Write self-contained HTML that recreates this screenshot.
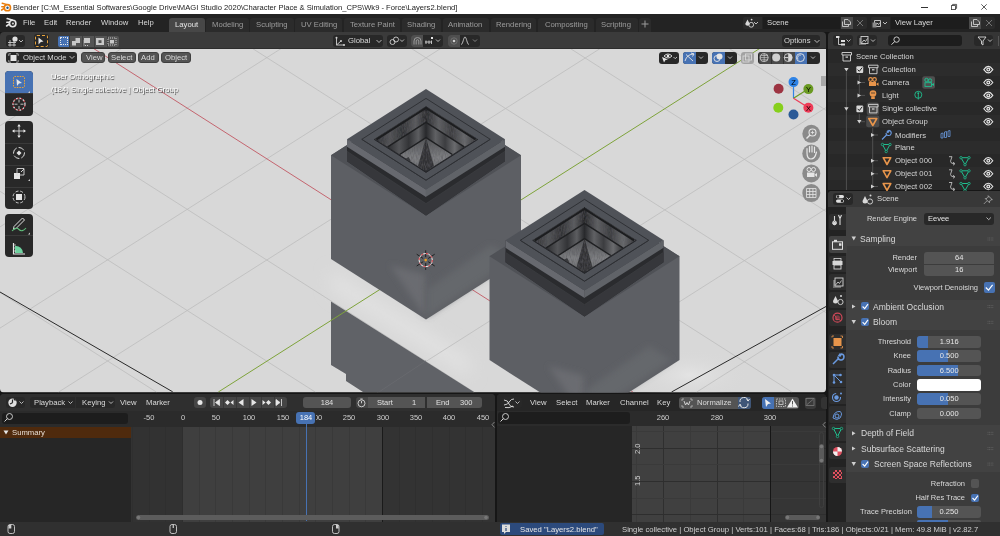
<!DOCTYPE html>
<html><head><meta charset="utf-8">
<style>
*{box-sizing:border-box;margin:0;padding:0}
html,body{width:1000px;height:536px;overflow:hidden;background:#161616}
body{position:relative;font-family:"Liberation Sans",sans-serif;font-size:7.7px;color:#d4d4d4}
.a{position:absolute}
.t{position:absolute;white-space:pre;line-height:10px;height:10px;will-change:transform}
.btn{position:absolute;background:#545454;border-radius:2px}
.fld{position:absolute;background:#545454;border-radius:2px}
svg{position:absolute;overflow:visible}
</style></head><body>

<!-- TITLE BAR -->
<div class="a" style="left:0;top:0;width:1000px;height:14px;background:#fff"></div>
<div class="t" style="left:13px;top:3px;color:#1a1a1a;font-size:7.6px">Blender [C:\M_Essential Softwares\Google Drive\MAGI Studio 2020\Character Place &amp; Simulation_CPS\Wk9 - Force\Layers2.blend]</div>

<!-- TOP BAR -->
<div class="a" style="left:0;top:14px;width:1000px;height:18px;background:#232323"></div>


<!-- title icons -->
<svg style="left:0;top:0" width="14" height="14" viewBox="0 0 14 14">
 <path d="M2.2 3.3 L7 4.6 M1.8 6.8 L4.9 6.8 M1.6 10 L4.6 8.2" stroke="#e87d0d" stroke-width="1.5" stroke-linecap="round"/>
 <circle cx="7.4" cy="7.7" r="3.1" fill="#fff" stroke="#e87d0d" stroke-width="1.6"/>
 <circle cx="7.5" cy="7.7" r="1.2" fill="#265787"/>
</svg>
<div class="a" style="left:921px;top:7px;width:7px;height:1px;background:#333"></div>
<svg style="left:951px;top:4px" width="6" height="6" viewBox="0 0 6 6"><rect x="0.4" y="1.6" width="4" height="4" fill="none" stroke="#333" stroke-width="0.8"/><path d="M1.6 1.6 V0.4 H5.6 V4.4 H4.4" fill="none" stroke="#333" stroke-width="0.8"/></svg>
<svg style="left:981px;top:4px" width="6" height="6" viewBox="0 0 6 6"><path d="M0.3 0.3 L5.7 5.7 M5.7 0.3 L0.3 5.7" stroke="#333" stroke-width="0.8"/></svg>

<!-- TOP BAR CONTENT -->
<svg style="left:0;top:14px" width="20" height="18" viewBox="0 14 20 18">
 <path d="M7.2 18.6 L12.2 19.9 M6.8 22.3 L10.2 22.3 M6.6 26 L9.8 23.6" stroke="#e6e6e6" stroke-width="1.6" stroke-linecap="round"/>
 <circle cx="12.7" cy="23.5" r="3.2" fill="#232323" stroke="#e6e6e6" stroke-width="1.6"/>
 <circle cx="12.9" cy="23.5" r="1.1" fill="#d0d0d0"/>
</svg>
<div class="t" style="left:22.5px;top:18px;color:#d9d9d9">File</div>
<div class="t" style="left:43.7px;top:18px;color:#d9d9d9">Edit</div>
<div class="t" style="left:66.2px;top:18px;color:#d9d9d9">Render</div>
<div class="t" style="left:100.7px;top:18px;color:#d9d9d9">Window</div>
<div class="t" style="left:138px;top:18px;color:#d9d9d9">Help</div>
<div class="a" style="left:169px;top:18px;width:35.5px;height:14px;background:#474747;border-radius:3px 3px 0 0"></div>
<div class="a" style="left:206px;top:18px;width:42.5px;height:14px;background:#2b2b2b;border-radius:3px 3px 0 0"></div>
<div class="a" style="left:250px;top:18px;width:43.5px;height:14px;background:#2b2b2b;border-radius:3px 3px 0 0"></div>
<div class="a" style="left:295px;top:18px;width:47px;height:14px;background:#2b2b2b;border-radius:3px 3px 0 0"></div>
<div class="a" style="left:344px;top:18px;width:56px;height:14px;background:#2b2b2b;border-radius:3px 3px 0 0"></div>
<div class="a" style="left:402px;top:18px;width:39px;height:14px;background:#2b2b2b;border-radius:3px 3px 0 0"></div>
<div class="a" style="left:443px;top:18px;width:46px;height:14px;background:#2b2b2b;border-radius:3px 3px 0 0"></div>
<div class="a" style="left:491px;top:18px;width:45px;height:14px;background:#2b2b2b;border-radius:3px 3px 0 0"></div>
<div class="a" style="left:538px;top:18px;width:55.5px;height:14px;background:#2b2b2b;border-radius:3px 3px 0 0"></div>
<div class="a" style="left:595.5px;top:18px;width:42px;height:14px;background:#2b2b2b;border-radius:3px 3px 0 0"></div>
<div class="a" style="left:639px;top:18px;width:12px;height:14px;background:#2b2b2b;border-radius:3px 3px 0 0"></div>
<div class="t" style="left:175px;top:19.5px;color:#e6e6e6">Layout</div>
<div class="t" style="left:211.7px;top:19.5px;color:#9c9c9c">Modeling</div>
<div class="t" style="left:255.5px;top:19.5px;color:#9c9c9c">Sculpting</div>
<div class="t" style="left:300.7px;top:19.5px;color:#9c9c9c">UV Editing</div>
<div class="t" style="left:350px;top:19.5px;color:#9c9c9c">Texture Paint</div>
<div class="t" style="left:406.7px;top:19.5px;color:#9c9c9c">Shading</div>
<div class="t" style="left:448px;top:19.5px;color:#9c9c9c">Animation</div>
<div class="t" style="left:495.5px;top:19.5px;color:#9c9c9c">Rendering</div>
<div class="t" style="left:544.5px;top:19.5px;color:#9c9c9c">Compositing</div>
<div class="t" style="left:600.7px;top:19.5px;color:#9c9c9c">Scripting</div>
<svg style="left:641px;top:20px" width="8" height="8" viewBox="0 0 8 8"><path d="M4 0.5 V7.5 M0.5 4 H7.5" stroke="#9c9c9c" stroke-width="1"/></svg>

<!-- scene selector -->
<div class="a" style="left:743px;top:17px;width:19px;height:12px;background:#2b2b2b;border-radius:2px 0 0 2px"></div>
<svg style="left:744px;top:18px" width="17" height="10" viewBox="0 0 17 10">
 <path d="M3.5 1.5 L1.2 6 A2.4 2.4 0 0 0 5.8 6 Z" fill="#d8d8d8"/><circle cx="7.2" cy="6.8" r="2.4" fill="none" stroke="#d8d8d8" stroke-width="0.9"/><circle cx="7.6" cy="1.6" r="0.9" fill="#d8d8d8"/>
 <path d="M10 4 L12 6 L14 4" fill="none" stroke="#cfcfcf" stroke-width="0.9"/>
</svg>
<div class="a" style="left:763px;top:17px;width:77px;height:12px;background:#1d1d1d"></div>
<div class="t" style="left:767px;top:18px;color:#d9d9d9">Scene</div>
<div class="a" style="left:840.5px;top:17px;width:12px;height:12px;background:#4a4a4a"></div>
<div class="a" style="left:852.5px;top:17px;width:14px;height:12px;background:#2b2b2b;border-radius:0 2px 2px 0"></div>
<svg style="left:841px;top:18px" width="11" height="10" viewBox="0 0 11 10"><path d="M1.5 3.5 V8.5 H7.5 V6.5 M3.5 6.5 V1.5 H7 L9.5 4 V6.5 H3.5" fill="none" stroke="#cfcfcf" stroke-width="0.9"/></svg>
<svg style="left:856px;top:19px" width="8" height="8" viewBox="0 0 8 8"><path d="M1 1 L7 7 M7 1 L1 7" stroke="#7a7a7a" stroke-width="0.9"/></svg>

<div class="a" style="left:871px;top:17px;width:19px;height:12px;background:#2b2b2b;border-radius:2px 0 0 2px"></div>
<svg style="left:872px;top:18px" width="17" height="10" viewBox="0 0 17 10">
 <path d="M2.5 2.5 H8.5 V8.5 H2.5 Z" fill="none" stroke="#cfcfcf" stroke-width="0.9"/><path d="M3 8 L5 5 L6.5 6.5 L8 4.5" fill="none" stroke="#cfcfcf" stroke-width="0.9"/><rect x="0.5" y="4.5" width="4" height="5" fill="#8a8a8a"/>
 <path d="M11 4 L13 6 L15 4" fill="none" stroke="#cfcfcf" stroke-width="0.9"/>
</svg>
<div class="a" style="left:891px;top:17px;width:78px;height:12px;background:#1d1d1d"></div>
<div class="t" style="left:895px;top:18px;color:#d9d9d9">View Layer</div>
<div class="a" style="left:969px;top:17px;width:12px;height:12px;background:#4a4a4a"></div>
<div class="a" style="left:981px;top:17px;width:14px;height:12px;background:#2b2b2b;border-radius:0 2px 2px 0"></div>
<svg style="left:969.5px;top:18px" width="11" height="10" viewBox="0 0 11 10"><path d="M1.5 3.5 V8.5 H7.5 V6.5 M3.5 6.5 V1.5 H7 L9.5 4 V6.5 H3.5" fill="none" stroke="#cfcfcf" stroke-width="0.9"/></svg>
<svg style="left:985px;top:19px" width="8" height="8" viewBox="0 0 8 8"><path d="M1 1 L7 7 M7 1 L1 7" stroke="#7a7a7a" stroke-width="0.9"/></svg>

<!-- VIEWPORT -->
<!--VP-->
<svg style="left:0;top:0" width="826" height="392" viewBox="0 0 826 392">
<defs>
<linearGradient id="wl" x1="0" y1="0" x2="1" y2="0"><stop offset="0" stop-color="#2c2d30"/><stop offset="0.3" stop-color="#535457"/><stop offset="0.55" stop-color="#333437"/><stop offset="0.8" stop-color="#5c5d60"/><stop offset="1" stop-color="#28292c"/></linearGradient>
<linearGradient id="wr" x1="0" y1="0" x2="1" y2="0"><stop offset="0" stop-color="#28292c"/><stop offset="0.25" stop-color="#606164"/><stop offset="0.5" stop-color="#3c3d40"/><stop offset="0.75" stop-color="#6a6b6e"/><stop offset="1" stop-color="#333437"/></linearGradient>
<linearGradient id="fl" x1="0" y1="0" x2="0" y2="1"><stop offset="0" stop-color="#505154"/><stop offset="0.6" stop-color="#7f8083"/><stop offset="1" stop-color="#6a6b6e"/></linearGradient>
<linearGradient id="crease" x1="0" y1="1" x2="0" y2="0"><stop offset="0" stop-color="#6a6c71"/><stop offset="1" stop-color="#5d5f64" stop-opacity="0"/></linearGradient>
<radialGradient id="glow" cx="0.5" cy="0.5" r="0.5"><stop offset="0" stop-color="#e6e6e6"/><stop offset="1" stop-color="#d8d8d8" stop-opacity="0"/></radialGradient>
<filter id="soft" x="-0.2" y="-0.2" width="1.4" height="1.4"><feGaussianBlur stdDeviation="3"/></filter><filter id="blur8" x="-0.5" y="-0.5" width="2" height="2"><feGaussianBlur stdDeviation="8"/></filter>
<filter id="noise2" x="0" y="0" width="1" height="1"><feTurbulence type="fractalNoise" baseFrequency="0.9 0.25" numOctaves="2" seed="7" result="n"/><feColorMatrix in="n" type="matrix" values="0 0 0 0 0.1  0 0 0 0 0.1  0 0 0 0 0.11  -1.2 0 0 0 0.75" result="c"/><feComposite in="c" in2="SourceGraphic" operator="in" result="m"/><feMerge><feMergeNode in="SourceGraphic"/><feMergeNode in="m"/></feMerge></filter>
<filter id="noise" x="0" y="0" width="1" height="1"><feTurbulence type="fractalNoise" baseFrequency="2.2" numOctaves="1" seed="3" result="n"/><feColorMatrix in="n" type="matrix" values="0 0 0 0 0.26  0 0 0 0 0.26  0 0 0 0 0.27  -0.7 0 0 0 0.5" result="c"/><feComposite in="c" in2="SourceGraphic" operator="in" result="m"/><feMerge><feMergeNode in="SourceGraphic"/><feMergeNode in="m"/></feMerge></filter>
</defs>
<clipPath id="vpc"><rect x="0" y="40" width="826" height="352.4" rx="4"/></clipPath><g clip-path="url(#vpc)">
<rect x="0" y="48" width="826" height="344.4" fill="#d8d8d8"/>
<polygon points="331,270 426,330 470,358 470,378 331,290" fill="#e1e1e1" filter="url(#blur8)"/>
<ellipse cx="690" cy="375" rx="60" ry="26" fill="url(#glow)" opacity="0.8"/>
<path d="M0.0 292.5L156.3 392.0M0.0 191.3L315.2 392.0M0.0 90.1L474.0 392.0M226.6 32.0L791.8 392.0M385.5 32.0L826.0 312.6M544.4 32.0L826.0 211.4M703.3 32.0L826.0 110.2M0.0 125.7L147.6 32.0M0.0 226.9L307.2 32.0M0.0 328.1L466.7 32.0M58.7 392.0L626.2 32.0M377.8 392.0L826.0 107.6M537.3 392.0L826.0 208.8M696.8 392.0L826.0 310.0" stroke="#bcbcbc" stroke-width="0.8" fill="none"/>
<polygon points="331,301.5 474,392 363,392 346,381 346,374 331,365" fill="#606267"/>
<path d="M379.5 391.6 L426 360.8" stroke="#6a6b70" stroke-width="0.8"/>
<path d="M67.7 32.0L632.9 392.0" stroke="#c0505c" stroke-width="0.85" fill="none"/>
<path d="M218.3 392.0L785.7 32.0" stroke="#7ea33a" stroke-width="1" fill="none"/>
<path d="M0 292 L172.7 391.8 M671.5 392 L826 306.5" stroke="#2a2a2a" stroke-width="1" fill="none"/>
<polygon points="331.0,155.3 426.0,94.8 521.0,155.3 521.0,259.1 426.0,319.6 331.0,259.1" fill="#5d5f64"/>
<polygon points="390.0,265.1 425.0,316.6 425.0,274.6" fill="#6a6c71" filter="url(#soft)"/>
<polygon points="427.0,316.6 513.0,259.1 491.0,245.1 427.0,289.6" fill="#65676c" filter="url(#soft)"/>
<polygon points="331.0,155.3 426.0,94.8 521.0,155.3 426.0,215.8" fill="#4f5156"/>
<polygon points="347.0,139.3 426.0,189.6 505.0,139.3 505.0,161.3 426.0,215.6 347.0,161.3" fill="#2a2b2e"/>
<polygon points="347.0,151.3 426.0,203.6 505.0,151.3 505.0,161.3 426.0,215.6 347.0,161.3" fill="#36373b"/>
<polyline points="347.0,151.3 426.0,203.6 505.0,151.3" fill="none" stroke="#3e3f43" stroke-width="1" opacity="0.6"/>
<polygon points="347.0,139.3 426.0,189.6 426.0,197.1 347.0,146.8" fill="#67696f"/>
<polygon points="425.7,189.6 505.0,139.3 505.0,146.8 425.7,197.1" fill="#606368"/>
<polygon points="347.0,139.3 426.0,89.0 505.0,139.3 426.0,189.6" fill="#4f5258"/>
<polygon points="361.8,139.3 426.0,98.4 490.2,139.3 426.0,180.2" fill="none" stroke="#2f3135" stroke-width="1"/>
<polygon points="374.0,139.3 426.0,106.2 478.0,139.3 426.0,172.4" fill="#2a2b2e"/>
<polygon points="374.5,139.3 426.0,106.5 426.0,122.4 387.7,146.8" fill="url(#wl)" filter="url(#noise2)"/>
<polygon points="426.0,106.5 477.5,139.3 464.3,146.8 426.0,122.4" fill="url(#wr)" filter="url(#noise2)"/>
<polygon points="387.7,146.8 426.0,122.4 426.0,137.7 399.7,154.5" fill="url(#wl)"/>
<polygon points="426.0,122.4 464.3,146.8 452.3,154.5 426.0,137.7" fill="url(#wr)"/>
<polygon points="399.7,154.5 426.0,137.7 452.3,154.5 426.0,171.3" fill="url(#fl)" filter="url(#noise2)"/>
<polygon points="426.0,137.7 418.0,166.3 426.0,171.8 434.0,166.3" fill="#303134" filter="url(#noise2)"/>
<polyline points="376.5,139.3 426.0,108.0 475.5,139.3" fill="none" stroke="#1c1d1f" stroke-width="2"/>
<rect x="422.5" y="170.3" width="7" height="5" fill="#2a2b2e"/>
<rect x="404.0" y="158.3" width="6" height="4" fill="#3a3b3e" transform="rotate(-30 407.0 160.3)"/>
<polyline points="387.7,146.8 426.0,122.4 464.3,146.8" fill="none" stroke="#1f2022" stroke-width="1.4"/>
<polyline points="399.7,154.5 426.0,137.7 452.3,154.5" fill="none" stroke="#1f2022" stroke-width="1.4"/>
<polygon points="362.3,139.3 374.0,139.3 426.0,172.4 478.0,139.3 489.7,139.3 426.0,179.7" fill="#4f5258"/>
<polyline points="361.8,139.3 426.0,180.2 490.2,139.3" fill="none" stroke="#2f3135" stroke-width="1"/>
<polyline points="374.0,139.3 426.0,172.4 478.0,139.3" fill="none" stroke="#25262a" stroke-width="1"/>
<polygon points="489.5,256.3 584.5,195.8 679.5,256.3 679.5,360.1 584.5,420.6 489.5,360.1" fill="#5d5f64"/>
<polygon points="548.5,366.1 583.5,417.6 583.5,375.6" fill="#6a6c71" filter="url(#soft)"/>
<polygon points="585.5,417.6 671.5,360.1 649.5,346.1 585.5,390.6" fill="#65676c" filter="url(#soft)"/>
<polygon points="489.5,256.3 584.5,195.8 679.5,256.3 584.5,316.8" fill="#4f5156"/>
<polygon points="505.5,240.3 584.5,290.6 663.5,240.3 663.5,262.3 584.5,316.6 505.5,262.3" fill="#2a2b2e"/>
<polygon points="505.5,252.3 584.5,304.6 663.5,252.3 663.5,262.3 584.5,316.6 505.5,262.3" fill="#36373b"/>
<polyline points="505.5,252.3 584.5,304.6 663.5,252.3" fill="none" stroke="#3e3f43" stroke-width="1" opacity="0.6"/>
<polygon points="505.5,240.3 584.5,290.6 584.5,298.1 505.5,247.8" fill="#67696f"/>
<polygon points="584.2,290.6 663.5,240.3 663.5,247.8 584.2,298.1" fill="#606368"/>
<polygon points="505.5,240.3 584.5,190.0 663.5,240.3 584.5,290.6" fill="#4f5258"/>
<polygon points="520.3,240.3 584.5,199.4 648.7,240.3 584.5,281.2" fill="none" stroke="#2f3135" stroke-width="1"/>
<polygon points="532.5,240.3 584.5,207.2 636.5,240.3 584.5,273.4" fill="#2a2b2e"/>
<polygon points="533.0,240.3 584.5,207.5 584.5,223.4 546.2,247.8" fill="url(#wl)" filter="url(#noise2)"/>
<polygon points="584.5,207.5 636.0,240.3 622.8,247.8 584.5,223.4" fill="url(#wr)" filter="url(#noise2)"/>
<polygon points="546.2,247.8 584.5,223.4 584.5,238.7 558.2,255.5" fill="url(#wl)"/>
<polygon points="584.5,223.4 622.8,247.8 610.8,255.5 584.5,238.7" fill="url(#wr)"/>
<polygon points="558.2,255.5 584.5,238.7 610.8,255.5 584.5,272.3" fill="url(#fl)" filter="url(#noise2)"/>
<polygon points="584.5,238.7 576.5,267.3 584.5,272.8 592.5,267.3" fill="#303134" filter="url(#noise2)"/>
<polyline points="535.0,240.3 584.5,209.0 634.0,240.3" fill="none" stroke="#1c1d1f" stroke-width="2"/>
<rect x="581.0" y="271.3" width="7" height="5" fill="#2a2b2e"/>
<rect x="562.5" y="259.3" width="6" height="4" fill="#3a3b3e" transform="rotate(-30 565.5 261.3)"/>
<polyline points="546.2,247.8 584.5,223.4 622.8,247.8" fill="none" stroke="#1f2022" stroke-width="1.4"/>
<polyline points="558.2,255.5 584.5,238.7 610.8,255.5" fill="none" stroke="#1f2022" stroke-width="1.4"/>
<polygon points="520.8,240.3 532.5,240.3 584.5,273.4 636.5,240.3 648.2,240.3 584.5,280.7" fill="#4f5258"/>
<polyline points="520.3,240.3 584.5,281.2 648.7,240.3" fill="none" stroke="#2f3135" stroke-width="1"/>
<polyline points="532.5,240.3 584.5,273.4 636.5,240.3" fill="none" stroke="#25262a" stroke-width="1"/>
<path d="M425.7 250.3 V257.1 M425.7 263.1 V269.9 M416.7 254.2 L423.2 258.5 M428.2 261.7 L434.7 266.0 M434.7 254.2 L428.2 258.5 M423.2 261.7 L416.7 266.0" stroke="#1a1a1a" stroke-width="0.9"/>
<circle cx="425.7" cy="260.1" r="6.6" fill="none" stroke="#f0f0f0" stroke-width="1"/>
<circle cx="425.7" cy="260.1" r="6.6" fill="none" stroke="#d8262f" stroke-width="1" stroke-dasharray="2.3 2.9"/>
<circle cx="425.7" cy="260.1" r="1.3" fill="#f0a020"/>
</g></svg>
<!--/VP-->
<div class="a" style="left:0;top:32px;width:826px;height:17px;background:#3b3b3b;border-radius:4px 4px 0 0"></div><div class="a" style="left:0;top:47.5px;width:826px;height:1.5px;background:#2d2d2d"></div>
<!--VPUI-->
<!-- tool header -->
<div class="a" style="left:6px;top:35px;width:19px;height:11.5px;background:#282828;border-radius:3px"></div>
<svg style="left:7px;top:35px" width="18" height="12" viewBox="0 0 18 12">
 <path d="M1 7.5 H9 M1 10 H9 M3 5 V11.5 M7 5 V11.5" stroke="#d0d0d0" stroke-width="0.9"/>
 <circle cx="8" cy="4" r="2.6" fill="#e0e0e0"/>
 <path d="M12 5 L14 7 L16 5" fill="none" stroke="#c8c8c8" stroke-width="0.9"/>
</svg>
<div class="a" style="left:33.5px;top:34px;width:15px;height:14px;background:#282828;border-radius:3px"></div>
<div class="a" style="left:34.5px;top:35px;width:13px;height:12px;border:1px dashed #e8a33b;border-radius:2px"></div>
<svg style="left:37px;top:37px" width="8" height="8" viewBox="0 0 8 8"><path d="M1.5 0.5 L6.5 4.5 L3.8 5 L1.5 7.5 Z" fill="#e6e6e6"/></svg>
<div class="a" style="left:58px;top:35.5px;width:11.3px;height:11px;background:#4772b3;border-radius:2px 0 0 2px"></div>
<div class="a" style="left:59.5px;top:37px;width:8.3px;height:8px;border:1px dotted #e6e6e6"></div>
<div class="a" style="left:70px;top:35.5px;width:49px;height:11px;background:#545454;border-radius:0 2px 2px 0"></div>
<div class="a" style="left:81.5px;top:35.5px;width:1px;height:11px;background:#3f3f3f"></div>
<div class="a" style="left:94px;top:35.5px;width:1px;height:11px;background:#3f3f3f"></div>
<div class="a" style="left:106.5px;top:35.5px;width:1px;height:11px;background:#3f3f3f"></div>
<svg style="left:71px;top:36.5px" width="48" height="9" viewBox="0 0 48 9">
 <path d="M1 4 H4.5 V1 H9 V6 H5 V8.5 H1 Z" fill="#c8c8c8"/>
 <rect x="13" y="1" width="6" height="5" fill="#c8c8c8"/><path d="M13 3.5 V8.5 H17" fill="none" stroke="#c8c8c8" stroke-dasharray="1 1"/>
 <rect x="25" y="1" width="8" height="7" fill="#c8c8c8"/><rect x="27.5" y="3.2" width="3" height="2.8" fill="#545454"/>
 <rect x="37" y="1" width="8" height="7" fill="none" stroke="#c8c8c8" stroke-dasharray="1 1"/><rect x="39" y="3" width="4" height="3.5" fill="#c8c8c8"/>
</svg>

<div class="a" style="left:332.5px;top:35px;width:50px;height:11.5px;background:#282828;border-radius:3px"></div>
<svg style="left:334px;top:35.5px" width="12" height="11" viewBox="0 0 12 11"><path d="M2.5 1 V9 H10.5 M2.5 9 L7 5" fill="none" stroke="#cfcfcf" stroke-width="0.9"/><circle cx="2.5" cy="1.8" r="1" fill="#cfcfcf"/><circle cx="10" cy="9" r="1" fill="#cfcfcf"/><circle cx="7" cy="5" r="1" fill="#cfcfcf"/></svg>
<div class="t" style="left:348px;top:36px;color:#dadada">Global</div>
<svg style="left:376px;top:38.5px" width="6" height="5" viewBox="0 0 6 5"><path d="M0.5 1 L3 3.5 L5.5 1" fill="none" stroke="#c8c8c8" stroke-width="0.9"/></svg>
<div class="a" style="left:387px;top:35px;width:19.5px;height:11.5px;background:#282828;border-radius:3px"></div>
<svg style="left:389px;top:36px" width="17" height="10" viewBox="0 0 17 10"><circle cx="3.5" cy="6" r="2.5" fill="none" stroke="#cfcfcf" stroke-width="0.9"/><circle cx="7" cy="3.5" r="2.5" fill="none" stroke="#cfcfcf" stroke-width="0.9"/><path d="M11 3.5 L13 5.5 L15 3.5" fill="none" stroke="#c8c8c8" stroke-width="0.9"/></svg>
<div class="a" style="left:411px;top:35px;width:32px;height:11.5px;background:#282828;border-radius:3px"></div>
<div class="a" style="left:411px;top:35px;width:12px;height:11.5px;background:#4f4f4f;border-radius:3px 0 0 3px"></div>
<svg style="left:412px;top:36px" width="30" height="10" viewBox="0 0 30 10"><path d="M2 8.5 V5 A3.5 3.5 0 0 1 9 5 V8.5 M4.2 8.5 V5 A1.3 1.3 0 0 1 6.8 5 V8.5" fill="none" stroke="#9a9a9a" stroke-width="1"/><path d="M13 6 H20 M14 4.5 V8 M17 4.5 V8 M19.5 4.5 V8" stroke="#cfcfcf" stroke-width="0.9"/><rect x="19" y="1" width="2" height="2" fill="#e6e6e6"/><path d="M24 3.5 L26 5.5 L28 3.5" fill="none" stroke="#c8c8c8" stroke-width="0.9"/></svg>
<div class="a" style="left:448px;top:35px;width:32px;height:11.5px;background:#282828;border-radius:3px"></div>
<div class="a" style="left:448px;top:35px;width:12px;height:11.5px;background:#4f4f4f;border-radius:3px 0 0 3px"></div>
<svg style="left:449px;top:36px" width="30" height="10" viewBox="0 0 30 10"><circle cx="5" cy="5" r="3.2" fill="none" stroke="#777" stroke-width="0.8"/><circle cx="5" cy="5" r="1.3" fill="#cfcfcf"/><path d="M12 8.5 C14 8.5 14.5 1 16 1 C17.5 1 18 8.5 20 8.5" fill="none" stroke="#cfcfcf" stroke-width="0.9"/><path d="M24 3.5 L26 5.5 L28 3.5" fill="none" stroke="#8a8a8a" stroke-width="0.9"/></svg>

<div class="a" style="left:782px;top:35px;width:38px;height:11.5px;background:#282828;border-radius:3px"></div>
<div class="t" style="left:784px;top:36px;color:#dadada">Options</div>
<svg style="left:814px;top:38.5px" width="6" height="5" viewBox="0 0 6 5"><path d="M0.5 1 L3 3.5 L5.5 1" fill="none" stroke="#c8c8c8" stroke-width="0.9"/></svg>

<!-- header row 2 -->
<div class="a" style="left:6px;top:51.5px;width:70.5px;height:11.7px;background:#282828;border-radius:3px"></div>
<svg style="left:8px;top:52.5px" width="11" height="10" viewBox="0 0 11 10"><rect x="2.5" y="2" width="6" height="6" fill="#e6e6e6"/><path d="M0.8 3 V0.8 H3 M8 0.8 H10.2 V3 M10.2 7 V9.2 H8 M3 9.2 H0.8 V7" fill="none" stroke="#aaa" stroke-width="0.9"/></svg>
<div class="t" style="left:23px;top:52.5px;color:#dadada">Object Mode</div>
<svg style="left:69px;top:55px" width="6" height="5" viewBox="0 0 6 5"><path d="M0.5 1 L3 3.5 L5.5 1" fill="none" stroke="#c8c8c8" stroke-width="0.9"/></svg>
<div class="a" style="left:81px;top:51.5px;width:24px;height:11.7px;background:#545454;border-radius:3px;border:1px solid #3f3f3f"></div>
<div class="a" style="left:107.5px;top:51.5px;width:28.3px;height:11.7px;background:#545454;border-radius:3px;border:1px solid #3f3f3f"></div>
<div class="a" style="left:137.5px;top:51.5px;width:21px;height:11.7px;background:#545454;border-radius:3px;border:1px solid #3f3f3f"></div>
<div class="a" style="left:160.7px;top:51.5px;width:30.5px;height:11.7px;background:#545454;border-radius:3px;border:1px solid #3f3f3f"></div>
<div class="t" style="left:85.5px;top:52.5px;color:#dadada">View</div>
<div class="t" style="left:111px;top:52.5px;color:#dadada">Select</div>
<div class="t" style="left:141px;top:52.5px;color:#dadada">Add</div>
<div class="t" style="left:164.5px;top:52.5px;color:#dadada">Object</div>

<div class="a" style="left:659px;top:51.6px;width:20.2px;height:12.2px;background:#282828;border-radius:3px"></div>
<svg style="left:660px;top:52px" width="19" height="11" viewBox="0 0 19 11"><path d="M4 4 Q8 0 12 4 Q8 8 4 4 Z" fill="none" stroke="#e6e6e6" stroke-width="0.9"/><circle cx="8" cy="4" r="1.3" fill="#e6e6e6"/><path d="M2 5 L8 7.5 L5.5 8 L4 10.5 Z" fill="#e6e6e6"/><path d="M13.5 5 L15.2 6.7 L17 5" fill="none" stroke="#c8c8c8" stroke-width="0.9"/></svg>
<div class="a" style="left:683px;top:51.6px;width:25px;height:12.2px;background:#282828;border-radius:3px"></div>
<div class="a" style="left:683px;top:51.6px;width:13px;height:12.2px;background:#4772b3;border-radius:3px 0 0 3px"></div>
<svg style="left:683px;top:52px" width="25" height="11" viewBox="0 0 25 11"><path d="M2 9 Q4 2 11 2 M8 1 L11 2 L9.5 4.5 M3 2.5 L10 9" fill="none" stroke="#e6e6e6" stroke-width="0.9"/><path d="M16 4.5 L18 6.5 L20 4.5" fill="none" stroke="#c8c8c8" stroke-width="0.9"/></svg>
<div class="a" style="left:712px;top:51.6px;width:25.3px;height:12.2px;background:#282828;border-radius:3px"></div>
<div class="a" style="left:712px;top:51.6px;width:13px;height:12.2px;background:#4772b3;border-radius:3px 0 0 3px"></div>
<svg style="left:712px;top:52px" width="25" height="11" viewBox="0 0 25 11"><circle cx="5" cy="6.5" r="3" fill="none" stroke="#e6e6e6" stroke-width="0.9"/><circle cx="7.5" cy="4.5" r="3" fill="#e6e6e6"/><path d="M16 4.5 L18 6.5 L20 4.5" fill="none" stroke="#c8c8c8" stroke-width="0.9"/></svg>
<div class="a" style="left:741.4px;top:51.6px;width:12.6px;height:12.2px;background:#a2a2a2;border-radius:3px"></div>
<svg style="left:742px;top:53px" width="11" height="10" viewBox="0 0 11 10"><rect x="1" y="3" width="6" height="6" fill="none" stroke="#d8d8d8" stroke-width="0.9"/><rect x="3.5" y="1" width="6" height="6" fill="none" stroke="#d8d8d8" stroke-width="0.9"/></svg>
<div class="a" style="left:757.5px;top:51.6px;width:62.5px;height:12.2px;background:#282828;border-radius:3px"></div>
<div class="a" style="left:758.5px;top:51.6px;width:48px;height:12.2px;background:#4a4a4a;border-radius:3px 0 0 3px"></div>
<div class="a" style="left:770.5px;top:51.6px;width:0.8px;height:12.2px;background:#333"></div>
<div class="a" style="left:782.5px;top:51.6px;width:0.8px;height:12.2px;background:#333"></div>
<div class="a" style="left:794.5px;top:51.6px;width:12px;height:12.2px;background:#4772b3"></div>
<svg style="left:758px;top:52px" width="62" height="11" viewBox="0 0 62 11">
 <circle cx="6.2" cy="5.6" r="4" fill="none" stroke="#d8d8d8" stroke-width="0.8"/><path d="M2.2 5.6 H10.2 M6.2 1.6 V9.6 M3 3.5 H9.4 M3 7.8 H9.4" stroke="#d8d8d8" stroke-width="0.6"/>
 <circle cx="18.2" cy="5.6" r="4" fill="#d0d0d0"/>
 <circle cx="30.2" cy="5.6" r="4" fill="none" stroke="#d8d8d8" stroke-width="0.8"/><path d="M30.2 1.6 A4 4 0 0 1 30.2 9.6 Z" fill="#d8d8d8"/><path d="M26.2 5.6 H30.2" stroke="#d8d8d8"/>
 <circle cx="42.4" cy="5.6" r="4" fill="none" stroke="#e8e8e8" stroke-width="0.9"/><path d="M40 7.5 A3 3 0 0 1 43 3" fill="none" stroke="#e8e8e8" stroke-width="0.8"/>
 <path d="M53 4.5 L55 6.5 L57 4.5" fill="none" stroke="#c8c8c8" stroke-width="0.9"/>
</svg>

<!-- viewport text -->
<div class="t" style="left:51.2px;top:71.5px;color:#ffffff;text-shadow:0.7px 0.7px 0.8px rgba(0,0,0,0.75)">User Orthographic</div>
<div class="t" style="left:51.2px;top:85px;color:#ffffff;text-shadow:0.7px 0.7px 0.8px rgba(0,0,0,0.75)">(184) Single collective | Object Group</div>

<!-- left toolbar -->
<div class="a" style="left:5px;top:71px;width:28px;height:45.4px;background:#282828;border-radius:4px"></div>
<div class="a" style="left:5px;top:71px;width:28px;height:22.5px;background:#4772b3;border-radius:4px 4px 0 0"></div>
<div class="a" style="left:5px;top:120.6px;width:28px;height:88.2px;background:#282828;border-radius:4px"></div>
<div class="a" style="left:5px;top:213.8px;width:28px;height:43.2px;background:#282828;border-radius:4px"></div>
<div class="a" style="left:5px;top:93.4px;width:28px;height:0.7px;background:#3a3a3a"></div>
<div class="a" style="left:5px;top:142.6px;width:28px;height:0.7px;background:#3a3a3a"></div>
<div class="a" style="left:5px;top:164.6px;width:28px;height:0.7px;background:#3a3a3a"></div>
<div class="a" style="left:5px;top:186.6px;width:28px;height:0.7px;background:#3a3a3a"></div>
<div class="a" style="left:5px;top:235.4px;width:28px;height:0.7px;background:#3a3a3a"></div>
<svg style="left:5px;top:71px" width="28" height="186" viewBox="0 0 28 186">
 <rect x="8.5" y="5.5" width="11" height="11" rx="1" fill="none" stroke="#e8a33b" stroke-width="1" stroke-dasharray="1.6 1"/>
 <path d="M11.5 8 L17 12 L14 12.5 L12 15 Z" fill="#e6e6e6"/>
 <path d="M25 20 V22 H23 Z" fill="#ccc"/>
 <circle cx="14" cy="33.2" r="6" fill="none" stroke="#e6e6e6" stroke-width="1.2" stroke-dasharray="2 1.5"/>
 <circle cx="14" cy="33.2" r="6" fill="none" stroke="#c0323c" stroke-width="1.2" stroke-dasharray="1.5 2" stroke-dashoffset="2"/>
 <path d="M14 28.5 V31.5 M14 35 V38 M9.5 33.2 H12.5 M15.5 33.2 H18.5" stroke="#e6e6e6" stroke-width="0.8"/>
 <path d="M14 54 V66 M8 60 H20" stroke="#d8d8d8" stroke-width="0.9"/>
 <path d="M14 53 L12.3 55.5 H15.7 Z M14 67 L12.3 64.5 H15.7 Z M7 60 L9.5 58.3 V61.7 Z M21 60 L18.5 58.3 V61.7 Z" fill="#e6e6e6"/>
 <path d="M8.5 82 A5.5 5.5 0 0 1 19.5 82 M19.5 82 A5.5 5.5 0 0 1 8.5 82" fill="none" stroke="#d8d8d8" stroke-width="1" stroke-dasharray="6 2"/>
 <path d="M14 79.5 L16.5 82 L14 84.5 L11.5 82 Z" fill="#e6e6e6"/>
 <rect x="9" y="102" width="6" height="6" fill="#e6e6e6"/><path d="M12 105 V97.5 H19 V104 H14.5" fill="none" stroke="#d8d8d8" stroke-width="0.9"/><path d="M16 101 L19 98" stroke="#d8d8d8"/>
 <path d="M25 108 V110 H23 Z" fill="#ccc"/>
 <circle cx="14" cy="126" r="6" fill="none" stroke="#d8d8d8" stroke-width="0.9" stroke-dasharray="3 1.8"/>
 <rect x="11" y="123" width="6" height="6" fill="#e6e6e6"/>
 <path d="M9 155.5 L17.5 147 L19.5 149 L11 157.5 L8.5 158 Z" fill="none" stroke="#e0e0e0" stroke-width="1"/>
 <path d="M7 160 Q11 155.5 14 158.5 Q17 161.5 21 157" fill="none" stroke="#5fbf7a" stroke-width="1.1"/>
 <path d="M25 161.5 V163.5 H23 Z" fill="#ccc"/>
 <path d="M8.5 172 V183 H20" fill="none" stroke="#e6e6e6" stroke-width="1.2"/>
 <path d="M10 182 V175 A7 7 0 0 1 18 182 Z" fill="#6fd2a0"/>
 <path d="M8 174 H11 M8 177 H10 M8 180 H11" stroke="#e6e6e6" stroke-width="0.7"/>
</svg>

<!-- nav gizmo -->
<svg style="left:760px;top:70px" width="66" height="140" viewBox="760 70 66 140">
 <circle cx="778.6" cy="88.8" r="5" fill="#9d3442"/>
 <circle cx="778.3" cy="107.8" r="5" fill="#86cf1c"/>
 <circle cx="793.5" cy="114.5" r="5" fill="#2b5a97"/>
 <path d="M793.5 98.3 V82 M793.5 98.3 L808.4 89.1 M793.5 98.3 L808.4 107.8" stroke-width="1.2" fill="none"/>
 <path d="M793.5 98.3 V86" stroke="#2f83e6" stroke-width="1.2"/>
 <path d="M793.5 98.3 L805 91" stroke="#6a9a22" stroke-width="1.2"/>
 <path d="M793.5 98.3 L805 105.6" stroke="#ee3b57" stroke-width="1.2"/>
 <circle cx="793.5" cy="82.1" r="5" fill="#2f83e6"/>
 <circle cx="808.4" cy="89.1" r="5" fill="#6a9a22"/>
 <circle cx="808.4" cy="107.8" r="5" fill="#ee3b57"/>
 <text x="793.5" y="84.8" font-family="Liberation Sans" font-size="7.5" fill="#000" text-anchor="middle">Z</text>
 <text x="808.4" y="91.8" font-family="Liberation Sans" font-size="7.5" fill="#000" text-anchor="middle">Y</text>
 <text x="808.4" y="110.5" font-family="Liberation Sans" font-size="7.5" fill="#000" text-anchor="middle">X</text>
 <circle cx="811.3" cy="133.8" r="9" fill="#8a8a8a"/>
 <circle cx="811.3" cy="153.5" r="9" fill="#8a8a8a"/>
 <circle cx="811.3" cy="173.4" r="9" fill="#8a8a8a"/>
 <circle cx="811.3" cy="193.1" r="9" fill="#8a8a8a"/>
 <circle cx="812.5" cy="132.5" r="3.5" fill="none" stroke="#e6e6e6" stroke-width="1.1"/><path d="M810 135 L806.5 138.5" stroke="#e6e6e6" stroke-width="1.4"/><path d="M812.5 130.8 V134.2 M810.8 132.5 H814.2" stroke="#e6e6e6" stroke-width="0.8"/>
 <path d="M807 153 V148.5 M809.5 152 V146.5 M812 152 V146 M814.5 152.5 V147 M807 153 Q807 159 811 159 Q815 159 816.5 152" fill="none" stroke="#e6e6e6" stroke-width="1.2" stroke-linecap="round"/>
 <circle cx="809" cy="169.5" r="2" fill="none" stroke="#e6e6e6" stroke-width="1"/><circle cx="813.5" cy="169.5" r="2" fill="none" stroke="#e6e6e6" stroke-width="1"/><rect x="807" y="172.5" width="7.5" height="4.5" fill="#e6e6e6"/><path d="M814.5 174.8 L817 173 V177 Z" fill="#e6e6e6"/>
 <path d="M806.5 188.5 H816 V197.5 H806.5 Z M806.5 191.5 H816 M806.5 194.5 H816 M809.7 188.5 V197.5 M812.9 188.5 V197.5" fill="none" stroke="#e6e6e6" stroke-width="0.8"/>
 <rect x="821" y="76" width="5" height="10" fill="#a8a8a8"/>
</svg>

<!--/VPUI-->

<!-- OUTLINER -->
<!--OUT-->
<div class="a" style="left:828px;top:32px;width:172px;height:158px;background:#282828;border-radius:4px 0 0 0;overflow:hidden">
<div class="a" style="left:0;top:31.2px;width:172px;height:13px;background:#2c2c2c"></div>
<div class="a" style="left:0;top:57.2px;width:172px;height:13px;background:#2c2c2c"></div>
<div class="a" style="left:0;top:83.2px;width:172px;height:13px;background:#2c2c2c"></div>
<div class="a" style="left:0;top:109.2px;width:172px;height:13px;background:#2c2c2c"></div>
<div class="a" style="left:0;top:135.2px;width:172px;height:13px;background:#2c2c2c"></div>
<div class="a" style="left:0;top:0;width:172px;height:17px;background:#353535"></div>
</div>
<div class="a" style="left:833.2px;top:35.2px;width:19.4px;height:11.2px;background:#282828;border-radius:3px"></div>
<div class="a" style="left:857.2px;top:35.2px;width:19.5px;height:11.2px;background:#282828;border-radius:3px"></div>
<div class="a" style="left:888.2px;top:35.2px;width:74.3px;height:11.2px;background:#1d1d1d;border-radius:3px"></div>
<div class="a" style="left:974.2px;top:35.2px;width:19.3px;height:11.2px;background:#282828;border-radius:3px"></div>
<svg style="left:833px;top:35px" width="170" height="12" viewBox="833 35 170 12">
 <path d="M837 37 H840 M838.5 37 V44.5 H841" fill="none" stroke="#cfcfcf" stroke-width="0.9"/><rect x="836" y="36" width="3" height="2" fill="#e0e0e0"/>
 <rect x="841" y="40" width="4" height="2" fill="#e0e0e0"/><rect x="841" y="43.5" width="4" height="2" fill="#e0e0e0"/>
 <path d="M846.5 39.5 L848.5 41.5 L850.5 39.5" fill="none" stroke="#c8c8c8" stroke-width="0.9"/>
 <rect x="859" y="38" width="7" height="7" fill="#6a6a6a"/><rect x="861" y="36.5" width="7" height="7" fill="#2a2a2a" stroke="#cfcfcf" stroke-width="0.9"/><path d="M861.5 43 L864 40 L865.5 41.5 L867.5 38.5" fill="none" stroke="#e0e0e0" stroke-width="0.8"/>
 <path d="M871 39.5 L873 41.5 L875 39.5" fill="none" stroke="#c8c8c8" stroke-width="0.9"/>
 <circle cx="896.6" cy="39.6" r="2.7" fill="none" stroke="#d8d8d8" stroke-width="0.9"/><path d="M894.7 41.5 L891.5 44.7" stroke="#d8d8d8" stroke-width="1"/>
 <path d="M978 37 H986 L983 41 V45 L981.5 44 V41 Z" fill="none" stroke="#d8d8d8" stroke-width="0.9"/>
 <path d="M988 39.5 L990 41.5 L992 39.5" fill="none" stroke="#c8c8c8" stroke-width="0.9"/>
 <rect x="998" y="36" width="1" height="10" fill="#555"/>
</svg>
<svg style="left:828px;top:49px" width="172" height="141" viewBox="828 49 172 141">
 <path d="M846.4 72 V190 M859.3 75 V95.4 H865 M859.3 82.5 H865 M859.3 114 V121.7 H865 M872.7 128 V186.5 M872.7 135 H878 M872.7 160.7 H878 M872.7 173.8 H878 M872.7 186.5 H878" stroke="#5a5a5a" stroke-width="0.8" fill="none"/>
 <path d="M844.2 68 H848.6 L846.4 71.5 Z M844.2 107.2 H848.6 L846.4 110.7 Z M857.1 120 H861.5 L859.3 123.5 Z" fill="#d0d0d0"/>
 <path d="M857.5 80.5 V84.5 L861 82.5 Z M857.5 93.4 V97.4 L861 95.4 Z M871 133 V137 L874.5 135 Z M871 158.7 V162.7 L874.5 160.7 Z M871 171.8 V175.8 L874.5 173.8 Z M871 184.5 V188.5 L874.5 186.5 Z" fill="#d0d0d0"/>
 <!-- scene collection icon -->
 <path d="M842 52.5 H851.5 V55 H842 Z M843 55 V61 H850.5 V55" fill="none" stroke="#d8d8d8" stroke-width="0.9"/><rect x="845.5" y="56.5" width="2.5" height="1.2" fill="#d8d8d8"/>
 <!-- checkboxes -->
 <rect x="856.4" y="66.2" width="6.8" height="6.8" rx="1" fill="#d8d8d8"/><path d="M857.6 69.6 L859.3 71.3 L862.2 67.6" fill="none" stroke="#222" stroke-width="1"/>
 <rect x="856.4" y="105.4" width="6.8" height="6.8" rx="1" fill="#d8d8d8"/><path d="M857.6 108.8 L859.3 110.5 L862.2 106.8" fill="none" stroke="#222" stroke-width="1"/>
 <!-- collection icons -->
 <path d="M868.5 65.2 H878 V67.7 H868.5 Z M869.5 67.7 V73.7 H877 V67.7" fill="none" stroke="#d8d8d8" stroke-width="0.9"/><rect x="872" y="69.2" width="2.5" height="1.2" fill="#d8d8d8"/>
 <rect x="866.7" y="102.5" width="12.3" height="12.5" rx="2" fill="#4a4a4a"/>
 <path d="M868.5 104.4 H878 V106.9 H868.5 Z M869.5 106.9 V112.9 H877 V106.9" fill="none" stroke="#d8d8d8" stroke-width="0.9"/><rect x="872" y="108.4" width="2.5" height="1.2" fill="#d8d8d8"/>
 <!-- camera icon orange -->
 <circle cx="870.5" cy="79.5" r="1.8" fill="none" stroke="#e8954b" stroke-width="1.2"/><circle cx="874.5" cy="79.5" r="1.8" fill="none" stroke="#e8954b" stroke-width="1.2"/>
 <rect x="869" y="82" width="7" height="4" fill="#e8954b"/><path d="M876 84 L878.5 82.5 V86 Z" fill="#e8954b"/>
 <!-- camera data icon -->
 <rect x="922.3" y="76.2" width="12.7" height="12.5" rx="2" fill="#4f4f4f"/>
 <circle cx="926.5" cy="80" r="1.7" fill="none" stroke="#1fbf8f" stroke-width="1"/><circle cx="930" cy="80.5" r="1.7" fill="none" stroke="#1fbf8f" stroke-width="1"/><rect x="925" y="82.7" width="6.5" height="3.7" fill="none" stroke="#1fbf8f" stroke-width="0.9"/><path d="M931.5 84.5 L934 83 V86 Z" fill="#1fbf8f"/>
 <!-- light icon -->
 <circle cx="873" cy="93.5" r="3.3" fill="#e8954b"/><rect x="871.2" y="96.5" width="3.6" height="2.5" fill="#e8954b"/><path d="M871 93 H875" stroke="#2b2b2b" stroke-width="0.7"/>
 <circle cx="918.3" cy="94.8" r="3.5" fill="none" stroke="#1fbf8f" stroke-width="0.9"/><path d="M918.3 93 V99.5" stroke="#1fbf8f" stroke-width="0.9"/><circle cx="918.3" cy="93.2" r="0.9" fill="#1fbf8f"/>
 <!-- object group highlighted icon -->
 <rect x="866.2" y="115.5" width="13.1" height="11.7" rx="2" fill="#4a4a4a"/>
 <path d="M868.8 118.5 H876.8 L872.8 125.5 Z" fill="none" stroke="#e8954b" stroke-width="1.6" stroke-linejoin="round"/>
 <!-- modifiers wrench -->
 <path d="M882 139.5 L886.5 135 M886 133 A2.6 2.6 0 1 0 889.5 130.5 L888 132.5 L887 132 L888.5 130" fill="none" stroke="#6a9ae0" stroke-width="1.1"/>
 <path d="M941 133.5 V138 H943 V133 Z M944.5 132 V137.5 H946.5 V131.5 Z M948 131 V136.5 H950 V130.5 Z" fill="none" stroke="#6a9ae0" stroke-width="0.8"/>
 <!-- plane mesh green -->
 <path d="M882.5 144.5 H890 L886.2 151.5 Z" fill="none" stroke="#1fbf8f" stroke-width="1"/><circle cx="882.5" cy="144.5" r="1.2" fill="#282828" stroke="#1fbf8f" stroke-width="0.8"/><circle cx="890" cy="144.5" r="1.2" fill="#282828" stroke="#1fbf8f" stroke-width="0.8"/><circle cx="886.2" cy="151.5" r="1.2" fill="#282828" stroke="#1fbf8f" stroke-width="0.8"/>
</svg>
<div class="t" style="left:855.9px;top:52.2px;color:#d4d4d4">Scene Collection</div>
<div class="t" style="left:881.8px;top:65.1px;color:#d4d4d4">Collection</div>
<div class="t" style="left:881.8px;top:78.0px;color:#d4d4d4">Camera</div>
<div class="t" style="left:881.8px;top:90.9px;color:#d4d4d4">Light</div>
<div class="t" style="left:881.8px;top:104.3px;color:#d4d4d4">Single collective</div>
<div class="t" style="left:881.8px;top:117.2px;color:#d4d4d4">Object Group</div>
<div class="t" style="left:895.1px;top:130.5px;color:#d4d4d4">Modifiers</div>
<div class="t" style="left:895.1px;top:143.0px;color:#d4d4d4">Plane</div>
<div class="t" style="left:895.1px;top:156.2px;color:#d4d4d4">Object 000</div>
<div class="t" style="left:895.1px;top:169.3px;color:#d4d4d4">Object 001</div>
<div class="t" style="left:895.1px;top:182.0px;color:#d4d4d4">Object 002</div>
<svg style="left:828px;top:49px" width="172" height="141" viewBox="828 49 172 141">
<path d="M883.2 157.7 H890.8 L887 164.5 Z" fill="none" stroke="#e8954b" stroke-width="1.6" stroke-linejoin="round"/>
<path d="M949 156.7 H952 L950.5 161.2 Q950.5 163.7 954 163.7 M953 162.2 L955 163.7 L953 165.2" fill="none" stroke="#cfcfcf" stroke-width="0.8"/>
<path d="M961 157.7 H969 L965 164.7 Z" fill="none" stroke="#1fbf8f" stroke-width="1"/><circle cx="961" cy="157.7" r="1.2" fill="#282828" stroke="#1fbf8f" stroke-width="0.8"/><circle cx="969" cy="157.7" r="1.2" fill="#282828" stroke="#1fbf8f" stroke-width="0.8"/><circle cx="965" cy="164.7" r="1.2" fill="#282828" stroke="#1fbf8f" stroke-width="0.8"/>
<path d="M883.2 170.8 H890.8 L887 177.6 Z" fill="none" stroke="#e8954b" stroke-width="1.6" stroke-linejoin="round"/>
<path d="M949 169.8 H952 L950.5 174.3 Q950.5 176.8 954 176.8 M953 175.3 L955 176.8 L953 178.3" fill="none" stroke="#cfcfcf" stroke-width="0.8"/>
<path d="M961 170.8 H969 L965 177.8 Z" fill="none" stroke="#1fbf8f" stroke-width="1"/><circle cx="961" cy="170.8" r="1.2" fill="#282828" stroke="#1fbf8f" stroke-width="0.8"/><circle cx="969" cy="170.8" r="1.2" fill="#282828" stroke="#1fbf8f" stroke-width="0.8"/><circle cx="965" cy="177.8" r="1.2" fill="#282828" stroke="#1fbf8f" stroke-width="0.8"/>
<path d="M883.2 183.5 H890.8 L887 190.3 Z" fill="none" stroke="#e8954b" stroke-width="1.6" stroke-linejoin="round"/>
<path d="M949 182.5 H952 L950.5 187.0 Q950.5 189.5 954 189.5 M953 188.0 L955 189.5 L953 191.0" fill="none" stroke="#cfcfcf" stroke-width="0.8"/>
<path d="M961 183.5 H969 L965 190.5 Z" fill="none" stroke="#1fbf8f" stroke-width="1"/><circle cx="961" cy="183.5" r="1.2" fill="#282828" stroke="#1fbf8f" stroke-width="0.8"/><circle cx="969" cy="183.5" r="1.2" fill="#282828" stroke="#1fbf8f" stroke-width="0.8"/><circle cx="965" cy="190.5" r="1.2" fill="#282828" stroke="#1fbf8f" stroke-width="0.8"/>
<path d="M983.8 69.6 Q988.3 63.1 992.8 69.6 Q988.3 76.1 983.8 69.6 Z" fill="none" stroke="#e6e6e6" stroke-width="1.1"/><circle cx="988.3" cy="69.6" r="2" fill="#e6e6e6"/><circle cx="988.3" cy="69.6" r="0.8" fill="#333"/>
<path d="M983.8 82.5 Q988.3 76.0 992.8 82.5 Q988.3 89.0 983.8 82.5 Z" fill="none" stroke="#e6e6e6" stroke-width="1.1"/><circle cx="988.3" cy="82.5" r="2" fill="#e6e6e6"/><circle cx="988.3" cy="82.5" r="0.8" fill="#333"/>
<path d="M983.8 95.4 Q988.3 88.9 992.8 95.4 Q988.3 101.9 983.8 95.4 Z" fill="none" stroke="#e6e6e6" stroke-width="1.1"/><circle cx="988.3" cy="95.4" r="2" fill="#e6e6e6"/><circle cx="988.3" cy="95.4" r="0.8" fill="#333"/>
<path d="M983.8 108.8 Q988.3 102.3 992.8 108.8 Q988.3 115.3 983.8 108.8 Z" fill="none" stroke="#e6e6e6" stroke-width="1.1"/><circle cx="988.3" cy="108.8" r="2" fill="#e6e6e6"/><circle cx="988.3" cy="108.8" r="0.8" fill="#333"/>
<path d="M983.8 121.7 Q988.3 115.2 992.8 121.7 Q988.3 128.2 983.8 121.7 Z" fill="none" stroke="#e6e6e6" stroke-width="1.1"/><circle cx="988.3" cy="121.7" r="2" fill="#e6e6e6"/><circle cx="988.3" cy="121.7" r="0.8" fill="#333"/>
<path d="M983.8 160.7 Q988.3 154.2 992.8 160.7 Q988.3 167.2 983.8 160.7 Z" fill="none" stroke="#e6e6e6" stroke-width="1.1"/><circle cx="988.3" cy="160.7" r="2" fill="#e6e6e6"/><circle cx="988.3" cy="160.7" r="0.8" fill="#333"/>
<path d="M983.8 173.8 Q988.3 167.3 992.8 173.8 Q988.3 180.3 983.8 173.8 Z" fill="none" stroke="#e6e6e6" stroke-width="1.1"/><circle cx="988.3" cy="173.8" r="2" fill="#e6e6e6"/><circle cx="988.3" cy="173.8" r="0.8" fill="#333"/>
<path d="M983.8 186.5 Q988.3 180.0 992.8 186.5 Q988.3 193.0 983.8 186.5 Z" fill="none" stroke="#e6e6e6" stroke-width="1.1"/><circle cx="988.3" cy="186.5" r="2" fill="#e6e6e6"/><circle cx="988.3" cy="186.5" r="0.8" fill="#333"/>
</svg>
<!--/OUT-->

<!-- PROPERTIES -->
<!--PROP-->
<div class="a" style="left:828px;top:191px;width:172px;height:330.5px;background:#424242;border-radius:4px 0 0 0;overflow:hidden">
<div class="a" style="left:0.0px;top:0.0px;width:172.0px;height:16.0px;background:#383838;"></div>
<div class="a" style="left:0.0px;top:16.0px;width:18.0px;height:315.0px;background:#232323;"></div>
<div class="a" style="left:18.0px;top:55.0px;width:154.0px;height:53.6px;background:#3c3c3c;"></div>
<div class="a" style="left:18.0px;top:139.0px;width:154.0px;height:95.0px;background:#3c3c3c;"></div>
<div class="a" style="left:18.0px;top:281.0px;width:154.0px;height:50.0px;background:#3c3c3c;"></div>
<div class="a" style="left:1.0px;top:22.5px;width:16.8px;height:16.0px;background:#2e2e2e;border-radius:2px 0 0 2px"></div>
<div class="a" style="left:1.0px;top:45.3px;width:18.0px;height:17.0px;background:#424242;border-radius:2px 0 0 2px"></div>
<div class="a" style="left:1.0px;top:64.5px;width:16.8px;height:16.5px;background:#2e2e2e;border-radius:2px 0 0 2px"></div>
<div class="a" style="left:1.0px;top:82.5px;width:16.8px;height:16.5px;background:#2e2e2e;border-radius:2px 0 0 2px"></div>
<div class="a" style="left:1.0px;top:100.5px;width:16.8px;height:16.5px;background:#2e2e2e;border-radius:2px 0 0 2px"></div>
<div class="a" style="left:1.0px;top:118.5px;width:16.8px;height:16.5px;background:#2e2e2e;border-radius:2px 0 0 2px"></div>
<div class="a" style="left:1.0px;top:142.5px;width:16.8px;height:16.5px;background:#2e2e2e;border-radius:2px 0 0 2px"></div>
<div class="a" style="left:1.0px;top:160.5px;width:16.8px;height:16.5px;background:#2e2e2e;border-radius:2px 0 0 2px"></div>
<div class="a" style="left:1.0px;top:179.0px;width:16.8px;height:16.8px;background:#2e2e2e;border-radius:2px 0 0 2px"></div>
<div class="a" style="left:1.0px;top:197.2px;width:16.8px;height:16.3px;background:#2e2e2e;border-radius:2px 0 0 2px"></div>
<div class="a" style="left:1.0px;top:215.4px;width:16.8px;height:16.4px;background:#2e2e2e;border-radius:2px 0 0 2px"></div>
<div class="a" style="left:1.0px;top:233.3px;width:16.8px;height:16.5px;background:#2e2e2e;border-radius:2px 0 0 2px"></div>
<div class="a" style="left:1.0px;top:251.8px;width:16.8px;height:16.5px;background:#2e2e2e;border-radius:2px 0 0 2px"></div>
<div class="a" style="left:1.0px;top:275.5px;width:16.8px;height:16.5px;background:#2e2e2e;border-radius:2px 0 0 2px"></div>
</div>
<div class="a" style="left:833.2px;top:193.0px;width:19.5px;height:11.5px;background:#282828;border-radius:3px;"></div>
<div class="t" style="left:877.0px;top:194.0px;color:#d9d9d9;font-size:7.7px">Scene</div>
<div class="t" style="left:797.4px;top:214.0px;width:120px;text-align:right;color:#d9d9d9;font-size:7.5px">Render Engine</div>
<div class="a" style="left:923.5px;top:213.3px;width:70.4px;height:11.4px;background:#282828;border-radius:3px;"></div>
<div class="t" style="left:927.5px;top:214.0px;color:#e6e6e6;font-size:7.5px">Eevee</div>
<div class="t" style="left:860.3px;top:234.0px;color:#d9d9d9;font-size:8.5px">Sampling</div>
<div class="t" style="left:797.4px;top:253.2px;width:120px;text-align:right;color:#d9d9d9;font-size:7.5px">Render</div>
<div class="t" style="left:797.4px;top:265.4px;width:120px;text-align:right;color:#d9d9d9;font-size:7.5px">Viewport</div>
<div class="a" style="left:923.5px;top:252.3px;width:70.5px;height:11.9px;background:#545454;border-radius:3px 3px 0 0;"></div>
<div class="a" style="left:923.5px;top:264.6px;width:70.5px;height:11.9px;background:#545454;border-radius:0 0 3px 3px;"></div>
<div class="t" style="left:923.5px;top:253.2px;width:70.5px;text-align:center;color:#e6e6e6;font-size:7.5px">64</div>
<div class="t" style="left:923.5px;top:265.4px;width:70.5px;text-align:center;color:#e6e6e6;font-size:7.5px">16</div>
<div class="t" style="left:858.3px;top:282.5px;width:120px;text-align:right;color:#d9d9d9;font-size:7.5px">Viewport Denoising</div>
<div class="a" style="left:984.0px;top:282.2px;width:10.5px;height:10.5px;background:#4772b3;border-radius:2px;"></div>
<div class="t" style="left:873.0px;top:301.6px;color:#d9d9d9;font-size:8.5px">Ambient Occlusion</div>
<div class="a" style="left:861.3px;top:302.4px;width:8.0px;height:8.0px;background:#4772b3;border-radius:2px;"></div>
<div class="t" style="left:873.0px;top:317.3px;color:#d9d9d9;font-size:8.5px">Bloom</div>
<div class="a" style="left:861.3px;top:318.1px;width:8.0px;height:8.0px;background:#4772b3;border-radius:2px;"></div>
<div class="t" style="left:790.9px;top:337.1px;width:120px;text-align:right;color:#d9d9d9;font-size:7.5px">Threshold</div>
<div class="a" style="left:916.9px;top:335.9px;width:64.5px;height:11.9px;background:#545454;border-radius:3px;"></div>
<div class="a" style="left:916.9px;top:335.9px;width:11.0px;height:11.9px;background:#4772b3;border-radius:3px 0 0 3px;"></div>
<div class="t" style="left:916.9px;top:337.1px;width:64.5px;text-align:center;color:#e6e6e6;font-size:7.5px">1.916</div>
<div class="t" style="left:790.9px;top:351.4px;width:120px;text-align:right;color:#d9d9d9;font-size:7.5px">Knee</div>
<div class="a" style="left:916.9px;top:350.2px;width:64.5px;height:11.9px;background:#545454;border-radius:3px;"></div>
<div class="a" style="left:916.9px;top:350.2px;width:31.4px;height:11.9px;background:#4772b3;border-radius:3px 0 0 3px;"></div>
<div class="t" style="left:916.9px;top:351.4px;width:64.5px;text-align:center;color:#e6e6e6;font-size:7.5px">0.500</div>
<div class="t" style="left:790.9px;top:365.8px;width:120px;text-align:right;color:#d9d9d9;font-size:7.5px">Radius</div>
<div class="a" style="left:916.9px;top:364.6px;width:64.5px;height:11.9px;background:#545454;border-radius:3px;"></div>
<div class="a" style="left:916.9px;top:364.6px;width:41.0px;height:11.9px;background:#4772b3;border-radius:3px 0 0 3px;"></div>
<div class="t" style="left:916.9px;top:365.8px;width:64.5px;text-align:center;color:#e6e6e6;font-size:7.5px">6.500</div>
<div class="t" style="left:790.9px;top:380.1px;width:120px;text-align:right;color:#d9d9d9;font-size:7.5px">Color</div>
<div class="a" style="left:916.9px;top:378.9px;width:64.5px;height:11.9px;background:#ffffff;border-radius:3px;"></div>
<div class="t" style="left:790.9px;top:394.4px;width:120px;text-align:right;color:#d9d9d9;font-size:7.5px">Intensity</div>
<div class="a" style="left:916.9px;top:393.2px;width:64.5px;height:11.9px;background:#545454;border-radius:3px;"></div>
<div class="a" style="left:916.9px;top:393.2px;width:31.4px;height:11.9px;background:#4772b3;border-radius:3px 0 0 3px;"></div>
<div class="t" style="left:916.9px;top:394.4px;width:64.5px;text-align:center;color:#e6e6e6;font-size:7.5px">0.050</div>
<div class="t" style="left:790.9px;top:408.7px;width:120px;text-align:right;color:#d9d9d9;font-size:7.5px">Clamp</div>
<div class="a" style="left:916.9px;top:407.5px;width:64.5px;height:11.9px;background:#545454;border-radius:3px;"></div>
<div class="t" style="left:916.9px;top:408.7px;width:64.5px;text-align:center;color:#e6e6e6;font-size:7.5px">0.000</div>
<div class="t" style="left:860.6px;top:428.3px;color:#d9d9d9;font-size:8.5px">Depth of Field</div>
<div class="t" style="left:860.6px;top:443.6px;color:#d9d9d9;font-size:8.5px">Subsurface Scattering</div>
<div class="t" style="left:873.5px;top:459.1px;color:#d9d9d9;font-size:8.5px">Screen Space Reflections</div>
<div class="a" style="left:861.3px;top:460.0px;width:8.0px;height:8.0px;background:#4772b3;border-radius:2px;"></div>
<div class="t" style="left:845.2px;top:478.6px;width:120px;text-align:right;color:#d9d9d9;font-size:7.5px">Refraction</div>
<div class="a" style="left:971.0px;top:479.3px;width:8.3px;height:8.3px;background:#545454;border-radius:2px;"></div>
<div class="t" style="left:845.2px;top:493.0px;width:120px;text-align:right;color:#d9d9d9;font-size:7.5px">Half Res Trace</div>
<div class="a" style="left:971.0px;top:493.7px;width:8.3px;height:8.3px;background:#4772b3;border-radius:2px;"></div>
<div class="t" style="left:860.0px;top:507.3px;color:#d9d9d9;font-size:7.5px">Trace Precision</div>
<div class="a" style="left:917.2px;top:506.4px;width:64.0px;height:11.8px;background:#545454;border-radius:3px;"></div>
<div class="a" style="left:917.2px;top:506.4px;width:14.6px;height:11.8px;background:#4772b3;border-radius:3px 0 0 3px;"></div>
<div class="t" style="left:917.2px;top:507.3px;width:64.0px;text-align:center;color:#e6e6e6;font-size:7.5px">0.250</div>
<div class="a" style="left:917.2px;top:519.8px;width:64.0px;height:2.0px;background:#545454;border-radius:3px 3px 0 0;"></div>
<div class="a" style="left:917.2px;top:519.8px;width:31.0px;height:2.0px;background:#4772b3;border-radius:3px 0 0 0;"></div>
<svg style="left:828px;top:191px" width="172" height="331" viewBox="828 191 172 331">

 <rect x="836" y="195" width="8" height="3.2" rx="1.6" fill="#e0e0e0"/><rect x="836" y="199.5" width="8" height="3.2" rx="1.6" fill="#e0e0e0"/><circle cx="838" cy="196.6" r="1.3" fill="#282828"/><circle cx="842" cy="201.1" r="1.3" fill="#282828"/>
 <path d="M846.5 197.5 L848.5 199.5 L850.5 197.5" fill="none" stroke="#c8c8c8" stroke-width="0.9"/>
 <path d="M865 196 L862.5 201 A2.5 2.5 0 0 0 867.5 201 Z" fill="#d8d8d8"/><circle cx="870" cy="201.5" r="2.6" fill="none" stroke="#d8d8d8" stroke-width="0.9"/><circle cx="870.5" cy="195.5" r="1" fill="#d8d8d8"/>
 <path d="M983.8 204 L987 200.8" stroke="#9a9a9a" stroke-width="0.9"/><path d="M985.3 198.6 L989.4 202.7 L989.7 201 L991 199.7 L992.3 199.8 L988.2 195.7 L988.3 197 L987 198.3 Z" fill="none" stroke="#b0b0b0" stroke-width="0.85" stroke-linejoin="round"/>
 <!-- tool tab -->
 <path d="M834.5 216 V221 M834.5 221 A1.8 1.8 0 1 0 834.6 221 M838.5 215 L840 218.5 L841.5 215 M840 218.5 V225" fill="none" stroke="#d8d8d8" stroke-width="1.1"/><circle cx="834.5" cy="223.5" r="1.8" fill="#d8d8d8"/>
 <!-- render tab -->
 <rect x="832.5" y="241.8" width="10" height="7.5" fill="none" stroke="#e0e0e0" stroke-width="1"/><rect x="834" y="239.8" width="3" height="2" fill="#e0e0e0"/><rect x="839" y="243.3" width="2.5" height="2.5" fill="#e0e0e0"/>
 <!-- output tab -->
 <rect x="832.5" y="261" width="10" height="4" fill="#d8d8d8"/><rect x="834" y="258.5" width="7" height="2.5" fill="none" stroke="#d8d8d8" stroke-width="0.8"/><rect x="834" y="265" width="7" height="4" fill="none" stroke="#d8d8d8" stroke-width="0.9"/>
 <!-- view layer tab -->
 <rect x="833" y="280" width="8" height="8" fill="#6a6a6a"/><rect x="835" y="278" width="8" height="8" fill="#2e2e2e" stroke="#d8d8d8" stroke-width="0.9"/><path d="M835.5 285 L838 282 L839.5 283.5 L841.5 280.5" fill="none" stroke="#d8d8d8" stroke-width="0.8"/>
 <!-- scene tab -->
 <path d="M835.5 296 L833 301 A2.5 2.5 0 0 0 838 301 Z" fill="#d8d8d8"/><circle cx="840.5" cy="302" r="2.6" fill="none" stroke="#d8d8d8" stroke-width="0.9"/><circle cx="841" cy="296" r="1" fill="#d8d8d8"/>
 <!-- world tab -->
 <circle cx="837.5" cy="317.7" r="4.5" fill="none" stroke="#d04858" stroke-width="1.2"/><path d="M834 314.7 Q837 316.7 836 319.7 Q839 318.7 841 320.7" fill="none" stroke="#d04858" stroke-width="1"/><circle cx="837.5" cy="317.7" r="2.5" fill="#d04858" opacity="0.5"/>
 <!-- object tab -->
 <rect x="833.5" y="338" width="8" height="8" fill="#e8954b"/><path d="M832 337.5 V336 H834 M840.5 336 H842.5 V338 M842.5 346 V348 H840.5 M834 348 H832 V346" fill="none" stroke="#e8954b" stroke-width="0.8"/>
 <!-- modifier tab -->
 <path d="M833 364 L838.5 358.5 M838 356.5 A3 3 0 1 0 841.5 354 L840 356 L839 355.5 L840.5 353.5" fill="none" stroke="#6a9ae0" stroke-width="1.5"/>
 <!-- particles -->
 <path d="M834 375 L840.5 381.5 M834 375 V382 M834 375 H840" fill="none" stroke="#6a9ae0" stroke-width="1"/><circle cx="834" cy="375" r="1.3" fill="#6a9ae0"/><circle cx="841" cy="382" r="1.3" fill="#6a9ae0"/><circle cx="834" cy="382.5" r="1.3" fill="#6a9ae0"/><circle cx="840.5" cy="375" r="1.3" fill="#6a9ae0"/>
 <!-- physics -->
 <circle cx="836.5" cy="397.5" r="4" fill="none" stroke="#6a9ae0" stroke-width="1.1" stroke-dasharray="18 6"/><circle cx="836.5" cy="397.5" r="2.2" fill="#6a9ae0"/><circle cx="841" cy="393.5" r="1" fill="#6a9ae0"/>
 <!-- constraints -->
 <path d="M833 418 Q834 411 840 411.5 Q843 413 840 418 Q837 421 833 418 Z" fill="none" stroke="#6a9ae0" stroke-width="1"/><circle cx="837" cy="416" r="2" fill="none" stroke="#6a9ae0" stroke-width="1"/>
 <!-- mesh data -->
 <path d="M833.5 428.5 H841.5 L837.5 436.5 Z" fill="none" stroke="#1fbf8f" stroke-width="1"/><circle cx="833.5" cy="428.5" r="1.2" fill="#232323" stroke="#1fbf8f" stroke-width="0.8"/><circle cx="841.5" cy="428.5" r="1.2" fill="#232323" stroke="#1fbf8f" stroke-width="0.8"/><circle cx="837.5" cy="436.5" r="1.2" fill="#232323" stroke="#1fbf8f" stroke-width="0.8"/>
 <!-- material -->
 <circle cx="837.5" cy="451.5" r="4.5" fill="#e05060"/><path d="M837.5 447 V451.5 H842 A4.5 4.5 0 0 0 837.5 447 Z" fill="#f0f0f0"/><path d="M833 451.5 H837.5 V456 A4.5 4.5 0 0 1 833 451.5 Z" fill="#f0f0f0"/>
 <!-- texture checker -->
 <rect x="833" y="470" width="9" height="9" fill="#e05060"/>
 <path d="M833 470 h2 v2 h-2 z M837 470 h2 v2 h-2 z M835 472 h2 v2 h-2 z M839 472 h2 v2 h-2 z M833 474 h2 v2 h-2 z M837 474 h2 v2 h-2 z M835 476 h2 v2 h-2 z M839 476 h2 v2 h-2 z M841 470 h1 v2 h-1 z M841 474 h1 v2 h-1 z M833 478 h2 v1 h-2 z M837 478 h2 v1 h-2 z" fill="#3a2a2a"/>
 <!-- panel triangles -->
 <path d="M851.5 236.5 H856 L853.75 240.5 Z" fill="#cfcfcf"/>
 <path d="M852 304.4 V308.6 L855.5 306.5 Z" fill="#cfcfcf"/>
 <path d="M851.5 320 H856 L853.75 324 Z" fill="#cfcfcf"/>
 <path d="M852 431.2 V435.4 L855.5 433.3 Z" fill="#cfcfcf"/>
 <path d="M852 446.4 V450.6 L855.5 448.5 Z" fill="#cfcfcf"/>
 <path d="M851.5 462 H856 L853.75 466 Z" fill="#cfcfcf"/>
 <!-- checkmarks -->
 <path d="M862.6 306.5 L864.7 308.6 L868 304.2" fill="none" stroke="#fff" stroke-width="1.1"/>
 <path d="M862.6 322.2 L864.7 324.3 L868 319.9" fill="none" stroke="#fff" stroke-width="1.1"/>
 <path d="M862.6 464 L864.7 466.1 L868 461.7" fill="none" stroke="#fff" stroke-width="1.1"/>
 <path d="M985.8 287.5 L988.5 290.2 L992.6 284.8" fill="none" stroke="#fff" stroke-width="1.2"/>
 <path d="M972.5 498 L974.6 500.1 L977.9 495.7" fill="none" stroke="#fff" stroke-width="1.1"/>
 <!-- dropdown chevron -->
 <path d="M986.5 217.5 L988.7 219.7 L990.9 217.5" fill="none" stroke="#c8c8c8" stroke-width="0.9"/>

<path d="M987.5 238.0 H993.5 M987.5 240.0 H993.5" stroke="#6a6a6a" stroke-width="0.7" stroke-dasharray="1 0.6"/>
<path d="M987.5 305.6 H993.5 M987.5 307.6 H993.5" stroke="#6a6a6a" stroke-width="0.7" stroke-dasharray="1 0.6"/>
<path d="M987.5 321.3 H993.5 M987.5 323.3 H993.5" stroke="#6a6a6a" stroke-width="0.7" stroke-dasharray="1 0.6"/>
<path d="M987.5 432.3 H993.5 M987.5 434.3 H993.5" stroke="#6a6a6a" stroke-width="0.7" stroke-dasharray="1 0.6"/>
<path d="M987.5 447.6 H993.5 M987.5 449.6 H993.5" stroke="#6a6a6a" stroke-width="0.7" stroke-dasharray="1 0.6"/>
<path d="M987.5 463.1 H993.5 M987.5 465.1 H993.5" stroke="#6a6a6a" stroke-width="0.7" stroke-dasharray="1 0.6"/>
</svg>
<!--/PROP-->

<!-- TIMELINE -->
<!--TL-->
<div class="a" style="left:0;top:394px;width:495px;height:127.5px;background:#333;border-radius:4px 4px 0 0;overflow:hidden">
<div class="a" style="left:0.0px;top:0.0px;width:495.0px;height:16.5px;background:#2f2f2f;"></div>
<div class="a" style="left:0.0px;top:16.5px;width:495.0px;height:16.0px;background:#2b2b2b;"></div>
<div class="a" style="left:0.0px;top:32.5px;width:131.0px;height:95.0px;background:#262626;"></div>
<div class="a" style="left:131.0px;top:32.5px;width:51.6px;height:95.0px;background:#323232;"></div>
<div class="a" style="left:182.6px;top:32.5px;width:200.0px;height:95.0px;background:#3f3f3f;"></div>
<div class="a" style="left:382.6px;top:32.5px;width:113.0px;height:95.0px;background:#333333;"></div>
<div class="a" style="left:132.1px;top:32.5px;width:1.0px;height:95.0px;background:#2f2f2f;"></div>
<div class="a" style="left:148.8px;top:32.5px;width:1.0px;height:95.0px;background:#2f2f2f;"></div>
<div class="a" style="left:165.4px;top:32.5px;width:1.0px;height:95.0px;background:#2f2f2f;"></div>
<div class="a" style="left:182.1px;top:32.5px;width:1.0px;height:95.0px;background:#2e2e2e;"></div>
<div class="a" style="left:198.8px;top:32.5px;width:1.0px;height:95.0px;background:#393939;"></div>
<div class="a" style="left:215.4px;top:32.5px;width:1.0px;height:95.0px;background:#393939;"></div>
<div class="a" style="left:232.1px;top:32.5px;width:1.0px;height:95.0px;background:#393939;"></div>
<div class="a" style="left:248.8px;top:32.5px;width:1.0px;height:95.0px;background:#393939;"></div>
<div class="a" style="left:265.4px;top:32.5px;width:1.0px;height:95.0px;background:#393939;"></div>
<div class="a" style="left:282.1px;top:32.5px;width:1.0px;height:95.0px;background:#393939;"></div>
<div class="a" style="left:298.8px;top:32.5px;width:1.0px;height:95.0px;background:#393939;"></div>
<div class="a" style="left:315.4px;top:32.5px;width:1.0px;height:95.0px;background:#393939;"></div>
<div class="a" style="left:332.1px;top:32.5px;width:1.0px;height:95.0px;background:#393939;"></div>
<div class="a" style="left:348.8px;top:32.5px;width:1.0px;height:95.0px;background:#393939;"></div>
<div class="a" style="left:365.4px;top:32.5px;width:1.0px;height:95.0px;background:#393939;"></div>
<div class="a" style="left:382.1px;top:32.5px;width:1.0px;height:95.0px;background:#2f2f2f;"></div>
<div class="a" style="left:398.8px;top:32.5px;width:1.0px;height:95.0px;background:#2f2f2f;"></div>
<div class="a" style="left:415.4px;top:32.5px;width:1.0px;height:95.0px;background:#2f2f2f;"></div>
<div class="a" style="left:432.1px;top:32.5px;width:1.0px;height:95.0px;background:#2f2f2f;"></div>
<div class="a" style="left:448.8px;top:32.5px;width:1.0px;height:95.0px;background:#2f2f2f;"></div>
<div class="a" style="left:465.4px;top:32.5px;width:1.0px;height:95.0px;background:#2f2f2f;"></div>
<div class="a" style="left:482.1px;top:32.5px;width:1.0px;height:95.0px;background:#2f2f2f;"></div>
<div class="a" style="left:382.1px;top:32.5px;width:1.0px;height:95.0px;background:#1a1a1a;"></div>
<div class="a" style="left:0.0px;top:33.3px;width:131.0px;height:10.6px;background:#4f2a0d;"></div>
</div>
<div class="a" style="left:5.6px;top:397.0px;width:19.8px;height:11.4px;background:#282828;border-radius:3px;"></div>
<div class="a" style="left:30.2px;top:397.0px;width:44.5px;height:11.4px;background:#282828;border-radius:3px 0 0 3px;"></div>
<div class="a" style="left:75.5px;top:397.0px;width:39.5px;height:11.4px;background:#282828;border-radius:0 3px 3px 0;"></div>
<div class="t" style="left:34.0px;top:397.7px;color:#d9d9d9;font-size:7.7px">Playback</div>
<div class="t" style="left:81.5px;top:397.7px;color:#d9d9d9;font-size:7.7px">Keying</div>
<div class="t" style="left:120.3px;top:397.7px;color:#d9d9d9;font-size:7.7px">View</div>
<div class="t" style="left:146.3px;top:397.7px;color:#d9d9d9;font-size:7.7px">Marker</div>
<div class="a" style="left:194.4px;top:396.6px;width:11.2px;height:11.8px;background:#454545;border-radius:3px;"></div>
<div class="a" style="left:210.0px;top:396.6px;width:77.0px;height:11.8px;background:#454545;border-radius:3px;"></div>
<div class="a" style="left:222.8px;top:396.6px;width:0.7px;height:11.8px;background:#383838;border-radius:0;"></div>
<div class="a" style="left:235.7px;top:396.6px;width:0.7px;height:11.8px;background:#383838;border-radius:0;"></div>
<div class="a" style="left:248.5px;top:396.6px;width:0.7px;height:11.8px;background:#383838;border-radius:0;"></div>
<div class="a" style="left:261.3px;top:396.6px;width:0.7px;height:11.8px;background:#383838;border-radius:0;"></div>
<div class="a" style="left:274.1px;top:396.6px;width:0.7px;height:11.8px;background:#383838;border-radius:0;"></div>
<div class="a" style="left:303.4px;top:397.0px;width:47.3px;height:11.4px;background:#545454;border-radius:3px;"></div>
<div class="t" style="left:307.0px;top:397.7px;width:40px;text-align:center;color:#e0e0e0;font-size:7.5px">184</div>
<div class="a" style="left:355.5px;top:397.0px;width:12.0px;height:11.4px;background:#454545;border-radius:3px 0 0 3px;"></div>
<div class="a" style="left:368.0px;top:397.0px;width:57.0px;height:11.4px;background:#545454;border-radius:0;"></div>
<div class="a" style="left:426.5px;top:397.0px;width:55.0px;height:11.4px;background:#545454;border-radius:0 3px 3px 0;"></div>
<div class="t" style="left:377.0px;top:397.7px;color:#e0e0e0;font-size:7.5px">Start</div>
<div class="t" style="left:411.5px;top:397.7px;color:#e0e0e0;font-size:7.5px">1</div>
<div class="t" style="left:436.0px;top:397.7px;color:#e0e0e0;font-size:7.5px">End</div>
<div class="t" style="left:459.5px;top:397.7px;color:#e0e0e0;font-size:7.5px">300</div>
<div class="a" style="left:2.0px;top:412.6px;width:126.2px;height:11.3px;background:#1d1d1d;border-radius:3px;"></div>
<div class="t" style="left:129.3px;top:413.3px;width:40px;text-align:center;color:#cfcfcf;font-size:7.5px">-50</div>
<div class="t" style="left:162.6px;top:413.3px;width:40px;text-align:center;color:#cfcfcf;font-size:7.5px">0</div>
<div class="t" style="left:195.9px;top:413.3px;width:40px;text-align:center;color:#cfcfcf;font-size:7.5px">50</div>
<div class="t" style="left:229.3px;top:413.3px;width:40px;text-align:center;color:#cfcfcf;font-size:7.5px">100</div>
<div class="t" style="left:262.6px;top:413.3px;width:40px;text-align:center;color:#cfcfcf;font-size:7.5px">150</div>
<div class="t" style="left:329.3px;top:413.3px;width:40px;text-align:center;color:#cfcfcf;font-size:7.5px">250</div>
<div class="t" style="left:362.6px;top:413.3px;width:40px;text-align:center;color:#cfcfcf;font-size:7.5px">300</div>
<div class="t" style="left:395.9px;top:413.3px;width:40px;text-align:center;color:#cfcfcf;font-size:7.5px">350</div>
<div class="t" style="left:429.3px;top:413.3px;width:40px;text-align:center;color:#cfcfcf;font-size:7.5px">400</div>
<div class="t" style="left:462.6px;top:413.3px;width:40px;text-align:center;color:#cfcfcf;font-size:7.5px">450</div>
<div class="a" style="left:315.5px;top:412px;width:12px;height:12px;overflow:hidden"><div class="t" style="left:-19.6px;top:1.3px;width:40px;text-align:center;color:#cfcfcf;font-size:7.5px">200</div></div>
<div class="a" style="left:296.3px;top:412.0px;width:19.2px;height:12.0px;background:#4772b3;border-radius:3px;"></div>
<div class="t" style="left:286.0px;top:413.3px;width:40px;text-align:center;color:#ffffff;font-size:7.5px">184</div>
<div class="a" style="left:305.5px;top:424.0px;width:1.0px;height:97.0px;background:#4772b3;border-radius:0;"></div>
<div class="t" style="left:11.8px;top:427.8px;color:#e6dcd2;font-size:7.7px">Summary</div>
<div class="a" style="left:136.0px;top:515.3px;width:352.5px;height:4.8px;background:#5c5c5c;border-radius:3px;"></div>
<svg style="left:0;top:394px" width="495" height="128" viewBox="0 394 495 128">
 <circle cx="12.5" cy="402.7" r="4.2" fill="#e0e0e0"/><path d="M12.5 402.7 V399.5 M12.5 402.7 L10 404" stroke="#282828" stroke-width="1.2"/><path d="M14 398.8 L15.5 400.5" stroke="#282828" stroke-width="1.3"/>
 <path d="M19.5 401.5 L21.5 403.5 L23.5 401.5" fill="none" stroke="#c8c8c8" stroke-width="0.9"/>
 <path d="M68.5 401.5 L70.5 403.5 L72.5 401.5 M109 401.5 L111 403.5 L113 401.5" fill="none" stroke="#c8c8c8" stroke-width="0.9"/>
 <circle cx="200" cy="402.5" r="2.5" fill="#e6e6e6"/>
 <path d="M214 399 V406 M215.5 402.5 L219.5 399.5 V405.5 Z" fill="#e6e6e6" stroke="#e6e6e6" stroke-width="0.8"/>
 <path d="M225 402.5 L227.5 400 L230 402.5 L227.5 405 Z M230.5 402.5 L233.5 400 V405 Z" fill="#e6e6e6"/>
 <path d="M238.5 402.5 L243.5 399 V406 Z" fill="#e6e6e6"/>
 <path d="M251.5 399 L256.5 402.5 L251.5 406 Z" fill="#e6e6e6"/>
 <path d="M262.5 400 L265.5 402.5 L262.5 405 Z M266 402.5 L268.5 400 L271 402.5 L268.5 405 Z" fill="#e6e6e6"/>
 <path d="M281.5 399 V406 M276 399.5 L280 402.5 L276 405.5 Z" fill="#e6e6e6" stroke="#e6e6e6" stroke-width="0.8"/>
 <circle cx="361.5" cy="403.3" r="3.5" fill="none" stroke="#d8d8d8" stroke-width="0.9"/><path d="M361.5 403.3 V401 M360.3 399 H362.7" stroke="#d8d8d8" stroke-width="0.9"/>
 <circle cx="9.5" cy="416.5" r="3" fill="none" stroke="#d8d8d8" stroke-width="0.9"/><path d="M7.4 418.6 L4.5 421.5" stroke="#d8d8d8" stroke-width="1"/>
 <path d="M3.5 430.5 H8.5 L6 434.5 Z" fill="#e6e6e6"/>
 <circle cx="138.5" cy="517.6" r="1.8" fill="#777"/><circle cx="486" cy="517.6" r="1.8" fill="#777"/>
 <path d="M494.5 422 L492 424.7 L494.5 427.4" fill="none" stroke="#9a9a9a" stroke-width="0.8"/>
</svg>
<div class="a" style="left:497px;top:394px;width:329px;height:127.5px;background:#333;border-radius:4px 4px 0 0;overflow:hidden">
<div class="a" style="left:0.0px;top:0.0px;width:329.0px;height:16.5px;background:#262626;"></div>
<div class="a" style="left:0.0px;top:16.5px;width:329.0px;height:15.0px;background:#2b2b2b;"></div>
<div class="a" style="left:0.0px;top:31.5px;width:134.6px;height:96.0px;background:#262626;"></div>
<div class="a" style="left:134.6px;top:31.5px;width:138.4px;height:96.0px;background:#404040;"></div>
<div class="a" style="left:273.0px;top:31.5px;width:56.0px;height:96.0px;background:#353535;"></div>
<div class="a" style="left:139.3px;top:31.5px;width:1.0px;height:96.0px;background:#3a3a3a;"></div>
<div class="a" style="left:193.0px;top:31.5px;width:1.0px;height:96.0px;background:#3a3a3a;"></div>
<div class="a" style="left:246.1px;top:31.5px;width:1.0px;height:96.0px;background:#3a3a3a;"></div>
<div class="a" style="left:165.7px;top:31.5px;width:1.0px;height:96.0px;background:#2f2f2f;"></div>
<div class="a" style="left:219.7px;top:31.5px;width:1.0px;height:96.0px;background:#2f2f2f;"></div>
<div class="a" style="left:134.6px;top:37.4px;width:194.4px;height:1.0px;background:#3a3a3a;"></div>
<div class="a" style="left:134.6px;top:70.4px;width:194.4px;height:1.0px;background:#3a3a3a;"></div>
<div class="a" style="left:134.6px;top:103.5px;width:194.4px;height:1.0px;background:#3a3a3a;"></div>
<div class="a" style="left:134.6px;top:53.7px;width:194.4px;height:1.0px;background:#2e2e2e;"></div>
<div class="a" style="left:134.6px;top:87.1px;width:194.4px;height:1.0px;background:#2e2e2e;"></div>
<div class="a" style="left:134.6px;top:119.7px;width:194.4px;height:1.0px;background:#2e2e2e;"></div>
<div class="a" style="left:272.5px;top:31.5px;width:1.2px;height:96.0px;background:#161616;"></div>
</div>
<div class="a" style="left:501.9px;top:397.0px;width:19.7px;height:11.4px;background:#282828;border-radius:3px;"></div>
<div class="t" style="left:530.0px;top:397.7px;color:#d9d9d9;font-size:7.7px">View</div>
<div class="t" style="left:555.6px;top:397.7px;color:#d9d9d9;font-size:7.7px">Select</div>
<div class="t" style="left:586.2px;top:397.7px;color:#d9d9d9;font-size:7.7px">Marker</div>
<div class="t" style="left:619.5px;top:397.7px;color:#d9d9d9;font-size:7.7px">Channel</div>
<div class="t" style="left:657.3px;top:397.7px;color:#d9d9d9;font-size:7.7px">Key</div>
<div class="a" style="left:678.7px;top:396.8px;width:72.3px;height:11.8px;background:#545454;border-radius:3px;"></div>
<div class="a" style="left:737.5px;top:396.8px;width:13.5px;height:11.8px;background:#3f5678;border-radius:0 3px 3px 0;"></div>
<div class="t" style="left:697.0px;top:397.7px;color:#d9d9d9;font-size:7.7px">Normalize</div>
<div class="a" style="left:762.0px;top:396.8px;width:37.4px;height:11.8px;background:#545454;border-radius:3px;"></div>
<div class="a" style="left:762.0px;top:396.8px;width:12.2px;height:11.8px;background:#4772b3;border-radius:3px 0 0 3px;"></div>
<div class="a" style="left:804.5px;top:396.8px;width:11.2px;height:11.8px;background:#3a3a3a;border-radius:3px;"></div>
<div class="a" style="left:820.5px;top:396.8px;width:6.0px;height:11.8px;background:#333;border-radius:3px 0 0 3px;"></div>
<div class="a" style="left:497.5px;top:412.0px;width:132.5px;height:11.5px;background:#1d1d1d;border-radius:3px;"></div>
<div class="t" style="left:643.4px;top:412.8px;width:40px;text-align:center;color:#cfcfcf;font-size:7.5px">260</div>
<div class="t" style="left:696.8px;top:412.8px;width:40px;text-align:center;color:#cfcfcf;font-size:7.5px">280</div>
<div class="t" style="left:749.8px;top:412.8px;width:40px;text-align:center;color:#cfcfcf;font-size:7.5px">300</div>
<div class="t" style="left:633px;top:443.6px;width:10px;text-align:center;color:#cfcfcf;font-size:7.5px;transform:rotate(-90deg)">2.0</div>
<div class="t" style="left:633px;top:476px;width:10px;text-align:center;color:#cfcfcf;font-size:7.5px;transform:rotate(-90deg)">1.5</div>
<div class="a" style="left:818.8px;top:431.9px;width:5.4px;height:76.0px;background:transparent;border-radius:3px;border:0.8px solid #3f3f3f"></div>
<div class="a" style="left:818.8px;top:444.2px;width:5.4px;height:18.6px;background:#5a5a5a;border-radius:3px;"></div>
<div class="a" style="left:785.2px;top:515.1px;width:35.2px;height:4.5px;background:#5a5a5a;border-radius:3px;"></div>
<svg style="left:497px;top:394px" width="329" height="128" viewBox="497 394 329 128">
 <path d="M504 400 Q508 400 509 404 Q510 407 514 407 M504 405 Q508 405 510 401 Q511 399 514 399 M505 407.5 Q509 408.5 513 406" fill="none" stroke="#e0e0e0" stroke-width="0.9"/>
 <path d="M515.5 401.5 L517.5 403.5 L519.5 401.5" fill="none" stroke="#c8c8c8" stroke-width="0.9"/>
 <path d="M682 401 V399 H684 M690 399 H692 V401 M692 405 V407 H690 M684 407 H682 V405" fill="none" stroke="#bbb" stroke-width="0.8"/><path d="M684 401 L685.5 405 L687 402.5 L688.5 405 L690 401" fill="none" stroke="#ddd" stroke-width="0.9"/>
 <path d="M740 402 A4 4 0 0 1 748 401 M748 403.5 A4 4 0 0 1 740 404 M746.5 399.5 L748.2 401 L749.5 399 M741.5 406 L739.8 404.5 L738.5 406.5" fill="none" stroke="#e6e6e6" stroke-width="1"/>
 <path d="M765 399 L771 403.5 L768 404 L766 407 Z" fill="#f0f0f0"/>
 <rect x="776.5" y="399" width="9" height="7.5" fill="none" stroke="#d0d0d0" stroke-width="0.8" stroke-dasharray="1.5 1"/><rect x="779" y="401" width="4" height="3.5" fill="none" stroke="#d0d0d0" stroke-width="0.8"/>
 <path d="M792.5 398.5 L798 407.5 H787 Z" fill="#f0f0f0"/><path d="M792.5 401 V404.5 M792.5 405.5 V406.5" stroke="#545454" stroke-width="1"/>
 <rect x="806" y="398.5" width="8" height="7" fill="none" stroke="#7a7a7a" stroke-width="0.8"/><path d="M807 404.5 L813 399.5" stroke="#7a7a7a" stroke-width="0.8"/>
 <circle cx="505.5" cy="416.5" r="3" fill="none" stroke="#d8d8d8" stroke-width="0.9"/><path d="M503.4 418.6 L500.5 421.5" stroke="#d8d8d8" stroke-width="1"/>
 <circle cx="787.5" cy="517.4" r="1.8" fill="#777"/><circle cx="818" cy="517.4" r="1.8" fill="#777"/>
 <circle cx="821.5" cy="446.5" r="1.8" fill="#777"/><circle cx="821.5" cy="460.5" r="1.8" fill="#777"/>
 <path d="M825.5 422 L823 424.7 L825.5 427.4" fill="none" stroke="#9a9a9a" stroke-width="0.8"/>
</svg>
<!--/TL-->

<!-- GRAPH EDITOR -->
<!--GE-->

<!--/GE-->

<!-- STATUS BAR -->
<!--SB-->
<div class="a" style="left:0;top:522px;width:1000px;height:14px;background:#303030"></div>
<svg style="left:0;top:522px" width="1000" height="14" viewBox="0 522 1000 14">
 <rect x="8" y="524.5" width="6.5" height="9" rx="2" fill="none" stroke="#cfcfcf" stroke-width="0.9"/><rect x="8.5" y="525" width="2.8" height="3.5" fill="#cfcfcf"/>
 <rect x="170" y="524.5" width="6.5" height="9" rx="2" fill="none" stroke="#cfcfcf" stroke-width="0.9"/><path d="M173.25 525 V528" stroke="#cfcfcf" stroke-width="1.2"/>
 <rect x="332.5" y="524.5" width="6.5" height="9" rx="2" fill="none" stroke="#cfcfcf" stroke-width="0.9"/><rect x="336" y="525" width="2.6" height="3.5" fill="#cfcfcf"/>
</svg>
<div class="a" style="left:499.5px;top:522.5px;width:104.4px;height:12.5px;background:#2c4a7c;border-radius:2px"></div>
<svg style="left:500px;top:523px" width="12" height="12" viewBox="0 0 12 12"><path d="M2 1.5 H10 V9 H6 L4 11 V9 H2 Z" fill="#dcdcdc"/><path d="M6 3 V3.8 M6 5 V8" stroke="#2c4a7c" stroke-width="1.2"/></svg>
<div class="t" style="left:519.5px;top:524.6px;color:#e6e6e6">Saved "Layers2.blend"</div>
<div class="t" style="left:622px;top:524.6px;color:#cfcfcf">Single collective | Object Group | Verts:101 | Faces:68 | Tris:186 | Objects:0/21 | Mem: 49.8 MiB | v2.82.7</div>
<!--/SB-->
</body></html>
